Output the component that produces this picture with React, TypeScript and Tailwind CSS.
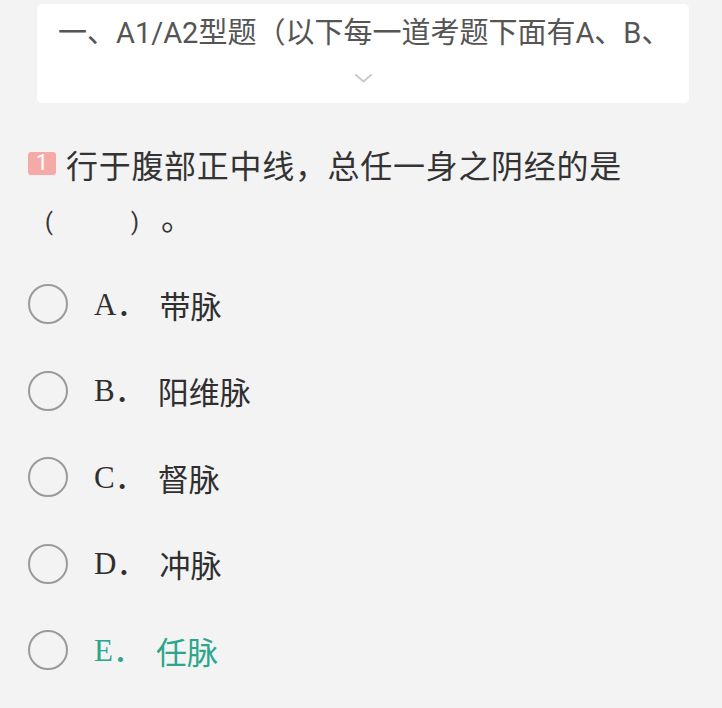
type Option = {
  key: string;
  text: string;
  correct?: boolean;
};

const options: Option[] = [
  { key: 'A', text: '带脉' },
  { key: 'B', text: '阳维脉' },
  { key: 'C', text: '督脉' },
  { key: 'D', text: '冲脉' },
  { key: 'E', text: '任脉', correct: true },
];

function SectionHeader() {
  return (
    <div className="ml-[37px] w-[652px] h-[99px] rounded-[5px] bg-white pt-[11px] pl-[21px] pr-[10px]">
      <div
        className="overflow-hidden whitespace-nowrap text-[29px] leading-[36px] text-[#555555]"
        style={{ fontFamily: 'Roboto, "Noto Sans CJK SC", sans-serif' }}
      >
        一、A1/A2型题（以下每一道考题下面有A、B、
      </div>
      <div className="mt-[23px] flex justify-center pr-[10px]">
        <svg width="17" height="9" viewBox="0 0 17 9" fill="none">
          <path d="M1 1l7.5 6.5L16 1" stroke="#c9c9c9" strokeWidth="2" strokeLinecap="round" strokeLinejoin="round" />
        </svg>
      </div>
    </div>
  );
}

export default function App() {
  return (
    <div
      className="h-[708px] w-[722px] overflow-hidden bg-[#f3f3f3] pt-[4px]"
      style={{ fontFamily: '"Noto Sans CJK SC", "Noto Sans", sans-serif' }}
    >
      <SectionHeader />

      <div className="mt-[37px] pl-[28px] pr-[20px] text-[#333333]">
        <div className="flex h-[48px] items-center text-[32px] tracking-[0.7px]">
          <span
            className="mr-[10px] flex h-[23px] w-[28px] -translate-y-[1px] items-center justify-center rounded-[3px] bg-[#f6aaa8] text-[22px] leading-none tracking-normal text-white"
            style={{ fontFamily: 'Roboto, sans-serif' }}
          >
            1
          </span>
          <span>行于腹部正中线，总任一身之阴经的是</span>
        </div>
        <div className="flex h-[48px] items-baseline pl-[17px] pt-[4px]">
          <span className="text-[23px]" style={{ fontFamily: 'Roboto, sans-serif' }}>
            (
          </span>
          <span className="ml-[78px] text-[23px]" style={{ fontFamily: 'Roboto, sans-serif' }}>
            )
          </span>
          <span className="ml-[22px] text-[32px]">。</span>
        </div>
      </div>

      <div className="mt-[25px] flex flex-col">
        {options.map((opt) => (
          <div key={opt.key} className="flex h-[86.5px] items-center pl-[28px]">
            <span className="h-[40px] w-[40px] shrink-0 rounded-full border-2 border-[#9a9a9a]"></span>
            <span
              className={
                'ml-[26px] flex items-center text-[31px] leading-none ' +
                (opt.correct ? 'text-[#2ca58d]' : 'text-[#2f2f2f]')
              }
              style={{ fontFamily: '"Liberation Serif", "Noto Sans CJK SC", serif' }}
            >
              <span>{opt.key}．</span>
              <span
                className="ml-[12px]"
                style={{ fontFamily: '"Noto Sans CJK SC", sans-serif' }}
              >
                {opt.text}
              </span>
            </span>
          </div>
        ))}
      </div>
    </div>
  );
}
